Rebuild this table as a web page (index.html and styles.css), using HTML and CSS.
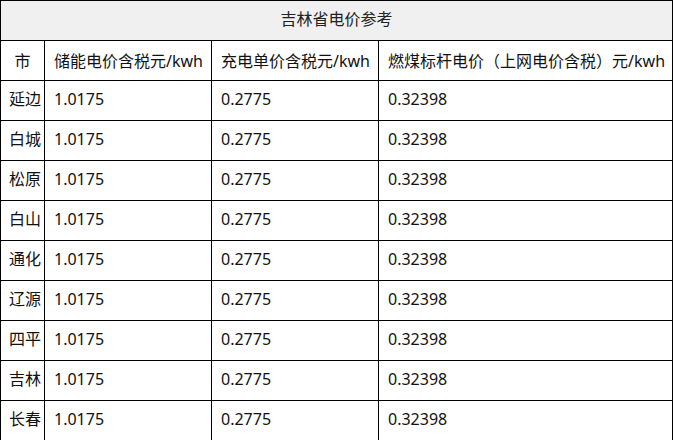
FILE: index.html
```html
<!DOCTYPE html>
<html lang="zh-CN">
<head>
<meta charset="utf-8">
<title>吉林省电价参考</title>
<link rel="stylesheet" href="styles.css">
</head>
<body>
<table class="price-table">
  <colgroup>
    <col class="c-city">
    <col class="c-store">
    <col class="c-charge">
    <col class="c-coal">
  </colgroup>
  <thead>
    <tr><th class="title" colspan="4">吉林省电价参考</th></tr>
    <tr class="head">
      <th class="city">市</th>
      <th>储能电价含税元/kwh</th>
      <th>充电单价含税元/kwh</th>
      <th>燃煤标杆电价<span class="punct" lang="zh-TW">（</span>上网电价含税<span class="punct" lang="zh-TW">）</span>元/kwh</th>
    </tr>
  </thead>
  <tbody>
    <tr><td>延边</td><td>1.0175</td><td>0.2775</td><td>0.32398</td></tr>
    <tr><td>白城</td><td>1.0175</td><td>0.2775</td><td>0.32398</td></tr>
    <tr><td>松原</td><td>1.0175</td><td>0.2775</td><td>0.32398</td></tr>
    <tr><td>白山</td><td>1.0175</td><td>0.2775</td><td>0.32398</td></tr>
    <tr><td>通化</td><td>1.0175</td><td>0.2775</td><td>0.32398</td></tr>
    <tr><td>辽源</td><td>1.0175</td><td>0.2775</td><td>0.32398</td></tr>
    <tr><td>四平</td><td>1.0175</td><td>0.2775</td><td>0.32398</td></tr>
    <tr><td>吉林</td><td>1.0175</td><td>0.2775</td><td>0.32398</td></tr>
    <tr><td>长春</td><td>1.0175</td><td>0.2775</td><td>0.32398</td></tr>
  </tbody>
</table>
</body>
</html>
```

FILE: styles.css
```css
html, body {
  margin: 0;
  padding: 0;
  background: #fff;
}

body {
  font-family: "Noto Sans", "Noto Sans CJK SC", sans-serif;
  font-size: 16px;
  color: #111;
}

.price-table {
  border-collapse: collapse;
  table-layout: fixed;
  width: 672px;
}

.c-city { width: 44px; }
.c-store { width: 167px; }
.c-charge { width: 167px; }
.c-coal { width: 294px; }

.price-table th,
.price-table td {
  border: 1px solid #000;
  height: 40px;
  padding: 0 2px 0 9px;
  font-weight: normal;
  text-align: left;
  vertical-align: middle;
  line-height: 22px;
  white-space: nowrap;
  box-sizing: border-box;
}

.price-table td {
  vertical-align: top;
  padding-top: 7px;
}

.price-table th.title {
  background: #f0f0f0;
  text-align: center;
  padding: 0 0 3px 0;
  color: #222;
}

.price-table th.city {
  text-align: center;
  padding: 0;
}

.price-table td:first-child {
  padding: 7px 0 0 8px;
}

.punct {
  font-family: "Noto Sans CJK TC", sans-serif;
}
```
